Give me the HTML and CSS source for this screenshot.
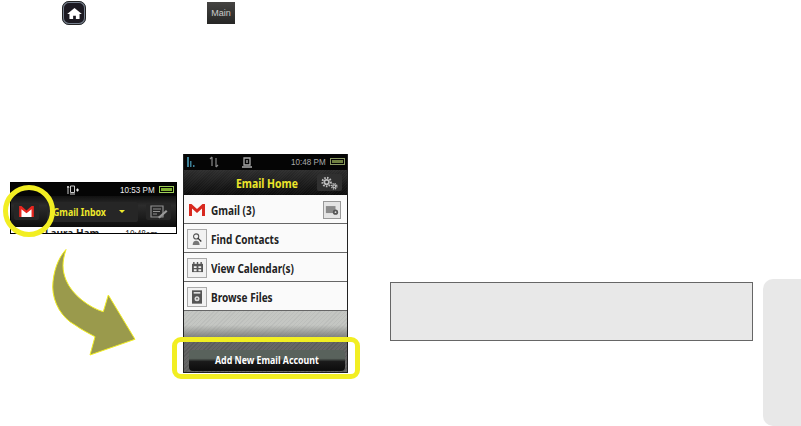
FILE: index.html
```html
<!DOCTYPE html>
<html lang="en">
<head>
    <meta charset="UTF-8">
    <title>Email Home</title>
    <link rel="stylesheet" href="styles.css">
</head>
<body>
    <div class="page">
        <div class="keys">
            <span class="home-key">
                <svg viewBox="0 0 16 12" width="15" height="11"><path d="M8 0 L16 6.500 H13.500 V12 H9.500 V8.500 H6.500 V12 H2.500 V6.500 H0 Z" fill="#fff"/></svg>
            </span>
            <span class="main-key">Main</span>
        </div>

        <div class="figures">
            <div class="col-left">
                <div class="inset">
                    <div class="status status-small">
                        <svg class="sync" viewBox="0 0 12 10" width="12" height="10"><path d="M1 1v8 M0 3l1-2 1 2 M3.500 1h4v6.500h-4z M3 9h5" fill="none" stroke="#ccc"/><path d="M9 5h3 M10.500 3.500v3" stroke="#eee" stroke-width="1.200"/></svg>
                        <span class="time">10:53 PM</span>
                        <span class="battery"><i></i></span>
                    </div>
                    <div class="inbox-bar">
                        <span class="tool-btn mail-btn">
                            <svg viewBox="0 0 16 12" width="15" height="11"><path d="M0 0h2.500L8 5l5.500-5H16v12H0z" fill="#e8261f"/><path d="M2.500 12V3.500L8 8l5.500-4.500V12z" fill="#fff"/></svg>
                        </span>
                        <span class="inbox-btn"><span class="squeeze">Gmail Inbox</span><i class="caret"></i></span>
                        <span class="tool-btn compose-btn">
                            <svg viewBox="0 0 18 14" width="18" height="14"><path d="M1 1h12v11H1z M3 4h8 M3 6.500h7 M3 9h4" fill="none" stroke="#8f8f8f" stroke-width="1.200"/><path d="M8 12l8-7 1.500 1.500-8 7z" fill="#999"/></svg>
                        </span>
                    </div>
                    <div class="peek"><span>Laura Ham</span><span class="peek-time">10:48am</span></div>
                    <span class="ring"></span>
                </div>
                <svg class="arrow" viewBox="50 246 87 111" width="87" height="111">
                    <path d="M66 249.500 C58 258 53 272 52.700 287 C53 303 62 318 75 325 C82 330 88 333 95 336.700 L90 355 L135 339.300 L108.300 295 L103.300 311.700 C90 308 72 295 66 280 C62 270 62 262 66 249.500 Z" fill="#9a9a4c" stroke="#f2ee22" stroke-width="1"/>
                </svg>
            </div>

            <div class="phone">
                <div class="status">
                    <svg viewBox="0 0 70 12" width="70" height="12"><path d="M1 1h2v10H1z M4 5h1.500v6H4z M7 9h1.500v2H7z" fill="#3d7f95"/><path d="M26 1v9 M24 3l2-2 M30 2v9 M30 11l2-2" fill="none" stroke="#888" stroke-width="1.200"/><path d="M58 2h6v7h-6z M56 11h10 M61 4v3" fill="none" stroke="#aaa" stroke-width="1.300"/></svg>
                    <span class="time">10:48 PM</span>
                    <span class="battery battery-dim"><i></i></span>
                </div>
                <div class="title-bar">
                    <span class="title squeeze">Email Home</span>
                    <span class="gear-btn">
                        <svg viewBox="0 0 20 14" width="19" height="14"><circle cx="7" cy="6" r="4.500" fill="none" stroke="#bdbdbd" stroke-width="2" stroke-dasharray="1.700 1.300"/><circle cx="7" cy="6" r="2.400" fill="none" stroke="#bdbdbd" stroke-width="1.800"/><circle cx="15" cy="10.500" r="2.800" fill="none" stroke="#bdbdbd" stroke-width="1.400" stroke-dasharray="1.300 .9"/><circle cx="15" cy="10.500" r="1.500" fill="none" stroke="#bdbdbd" stroke-width="1.300"/></svg>
                    </span>
                </div>
                <div class="rows">
                    <div class="row">
                        <svg class="gmail-m" viewBox="0 0 16 12" width="16" height="12"><path d="M0 0h2.500L8 5l5.500-5H16v12h-3V4.500L8 9 3 4.500V12H0z" fill="#d8291f"/></svg>
                        <span class="squeeze">Gmail (3)</span>
                        <span class="row-gear">
                            <svg viewBox="0 0 16 13" width="14" height="12"><path d="M1 2h11v8H1z" fill="#8a8a8a"/><circle cx="12" cy="9" r="3" fill="#555"/><circle cx="12" cy="9" r="1" fill="#ddd"/></svg>
                        </span>
                    </div>
                    <div class="row">
                        <span class="row-icon"><svg viewBox="0 0 14 16" width="12" height="14"><circle cx="6" cy="5" r="3" fill="none" stroke="#555" stroke-width="1.300"/><path d="M2 15c0-4 2-5 4-5s4 1 4 5z" fill="#777"/><path d="M8 7l4 4" stroke="#333" stroke-width="1.500"/></svg></span>
                        <span class="squeeze">Find Contacts</span>
                    </div>
                    <div class="row">
                        <span class="row-icon"><svg viewBox="0 0 14 12" width="13" height="11"><path d="M1 2h12v9H1z" fill="#555"/><path d="M3 0v3 M7 0v3 M11 0v3" stroke="#555" stroke-width="1.500"/><path d="M3 4.500h3v2H3z M8 4.500h3v2H8z M3 8h3v2H3z M8 8h3v2H8z" fill="#eee"/></svg></span>
                        <span class="squeeze">View Calendar(s)</span>
                    </div>
                    <div class="row">
                        <span class="row-icon"><svg viewBox="0 0 12 16" width="10" height="14"><path d="M0 0h12v16H0z" fill="#555"/><path d="M2 2h8v2H2z" fill="#ddd"/><circle cx="6" cy="10" r="3" fill="#ddd"/><circle cx="6" cy="10" r="1" fill="#555"/></svg></span>
                        <span class="squeeze">Browse Files</span>
                    </div>
                </div>
                <div class="hatch"></div>
                <div class="add-bar">
                    <span class="add-btn"><span class="squeeze add-label">Add New Email Account</span></span>
                </div>
                <span class="highlight"></span>
            </div>

            <div class="note"></div>
            <div class="side-tab"></div>
        </div>
    </div>
</body>
</html>
```

FILE: styles.css
```css
body {
    margin: 0;
    background-color: #fff;
    font-family: "Noto Sans", Arial, sans-serif;
}

.page {
    width: 801px;
    height: 426px;
    overflow: hidden;
}

/* the phone's font is narrower than anything installed */
.squeeze {
    display: inline-block;
    transform: scaleX(0.8);
    transform-origin: left center;
    white-space: nowrap;
}

.keys {
    display: flex;
    align-items: center;
    gap: 121px;
    height: 26px;
    padding-left: 62px;
}

.home-key {
    display: flex;
    align-items: center;
    justify-content: center;
    box-sizing: border-box;
    width: 24px;
    height: 24px;
    background-color: #1c1a22;
    border: 2px solid #77818f;
    outline: 1px solid #222;
    outline-offset: -1px;
    border-radius: 7px;
}

.main-key {
    width: 28px;
    height: 22px;
    background: linear-gradient(#454442, #262625);
    color: #c9c9c9;
    font-family: "Liberation Sans", Arial, sans-serif;
    font-size: 9px;
    line-height: 22px;
    text-align: center;
}

.figures {
    display: flex;
    align-items: flex-start;
    height: 400px;
}

.col-left {
    width: 183px;
    flex: none;
    padding-top: 156px;
    box-sizing: border-box;
}

.inset {
    position: relative;
    box-sizing: border-box;
    width: 167px;
    height: 52px;
    margin-left: 10px;
    background-color: #000;
    border: 1px solid #000;
}

.status {
    display: flex;
    align-items: center;
    height: 16px;
    padding: 0 2px;
    background-color: #050505;
    color: #aaa;
    font-family: "Liberation Sans", Arial, sans-serif;
    font-size: 9.500px;
}

.status .time {
    margin-left: auto;
    margin-right: 4px;
    transform: scaleX(0.85);
    transform-origin: right center;
}

.status-small {
    height: 13px;
    color: #eee;
}

.status-small .sync {
    margin-left: 54px;
}

.battery {
    display: block;
    box-sizing: border-box;
    width: 15px;
    height: 7px;
    border: 1px solid #9fce5a;
    padding: 1px;
}

.battery i {
    display: block;
    height: 100%;
    background-color: #7fb12f;
}

.battery-dim {
    border-color: #8b9a63;
}

.battery-dim i {
    background-color: #6f8040;
}

.inbox-bar {
    display: flex;
    align-items: center;
    gap: 8px;
    height: 31px;
    padding: 0 5px 0 3px;
    background: linear-gradient(#111, #2c2c2c 30%, #1c1c1c 70%, #0c0c0c);
}

.tool-btn {
    display: flex;
    align-items: center;
    justify-content: center;
    width: 25px;
    height: 16px;
    background-color: #262626;
    border-radius: 2px;
}

.inbox-btn {
    display: flex;
    align-items: center;
    width: 91px;
    height: 20px;
    padding-left: 6px;
    box-sizing: border-box;
    background-color: #262626;
    border-radius: 2px;
    color: #eeea2c;
    font-size: 11px;
    font-weight: 700;
}

.caret {
    width: 0;
    height: 0;
    border: 3px solid transparent;
    border-top: 3px solid #eeea2c;
    border-bottom: 0;
}

.compose-btn {
    margin-left: auto;
}

.peek {
    display: flex;
    gap: 26px;
    height: 6px;
    padding-left: 34px;
    overflow: hidden;
    background-color: #fff;
    color: #222;
    font-size: 10px;
    font-weight: 700;
    line-height: 13px;
    white-space: nowrap;
}

.peek-time {
    font-size: 8px;
    font-weight: 400;
}

.ring {
    position: absolute;
    left: -8px;
    top: 2px;
    box-sizing: border-box;
    width: 52px;
    height: 52px;
    border: 5px solid #f2ee22;
    border-radius: 50%;
}

.arrow {
    display: block;
    margin: 12px 0 0 50px;
}

.phone {
    position: relative;
    display: flex;
    flex-direction: column;
    box-sizing: border-box;
    flex: none;
    width: 165px;
    height: 219px;
    margin-top: 128px;
    border: 1px solid #222;
    border-top: 0;
    background-color: #fff;
}

.title-bar {
    display: flex;
    align-items: center;
    justify-content: flex-end;
    height: 26px;
    padding-right: 5px;
    position: relative;
    background:
        linear-gradient(rgba(70, 70, 70, 0.5), rgba(0, 0, 0, 0.4)),
        repeating-linear-gradient(135deg, #202020 0 1px, #141414 1px 2px);
}

.title {
    position: absolute;
    left: 52px;
    color: #ece62a;
    font-size: 13px;
    font-weight: 700;
}

.gear-btn {
    display: flex;
    align-items: center;
    justify-content: center;
    width: 25px;
    height: 17px;
    background-color: #303030;
    border-radius: 2px;
}

.rows {
    display: flex;
    flex-direction: column;
}

.row {
    display: flex;
    align-items: center;
    gap: 4px;
    box-sizing: border-box;
    height: 29px;
    padding: 1px 6px 0 3px;
    background-color: #fafafa;
    border-bottom: 1px solid #666;
    color: #222;
    font-size: 13px;
    font-weight: 700;
}

.row .squeeze {
    transform: scaleX(0.77);
}

.gmail-m {
    margin-left: 2px;
    margin-right: 2px;
}

.row-icon {
    display: flex;
    align-items: center;
    justify-content: center;
    box-sizing: border-box;
    width: 20px;
    height: 20px;
    background-color: #f2f2f2;
    border: 1px solid #aaa;
}

.row-gear {
    display: flex;
    align-items: center;
    justify-content: center;
    box-sizing: border-box;
    width: 18px;
    height: 18px;
    margin-left: auto;
    background-color: #e4e4e4;
    border: 1px solid #999;
}

.hatch {
    height: 28px;
    background:
        linear-gradient(rgba(190, 192, 190, 0.2), rgba(190, 192, 190, 0.2) 50%, rgba(110, 112, 110, 0.9)),
        repeating-linear-gradient(135deg, #bcbebb 0 1px, #c6c8c4 1px 3px);
}

.add-bar {
    flex: 1;
    display: flex;
    padding: 11px 2px 1px 5px;
    background: repeating-linear-gradient(135deg, #5c5c5c 0 1px, #666 1px 3px);
}

.add-btn {
    flex: 1;
    display: flex;
    justify-content: center;
    height: 21px;
    background: linear-gradient(#59625c 0 40%, #1a1a1a 55%, #0c0c0c);
    border-radius: 4px;
    color: #fff;
    font-size: 11px;
    font-weight: 700;
    line-height: 19px;
}

.add-label {
    transform-origin: center;
}

.highlight {
    position: absolute;
    left: -12px;
    bottom: -7px;
    box-sizing: border-box;
    width: 188px;
    height: 42px;
    border: 5px solid #f2ee22;
    border-radius: 9px;
}

.note {
    flex: none;
    box-sizing: border-box;
    width: 363px;
    height: 59px;
    margin: 256px 0 0 42px;
    background-color: #e8e8e8;
    border: 1px solid #666;
}

.side-tab {
    flex: none;
    width: 38px;
    height: 147px;
    margin: 253px 0 0 10px;
    background-color: #e8e8e8;
    border-radius: 10px 0 0 10px;
}
```
